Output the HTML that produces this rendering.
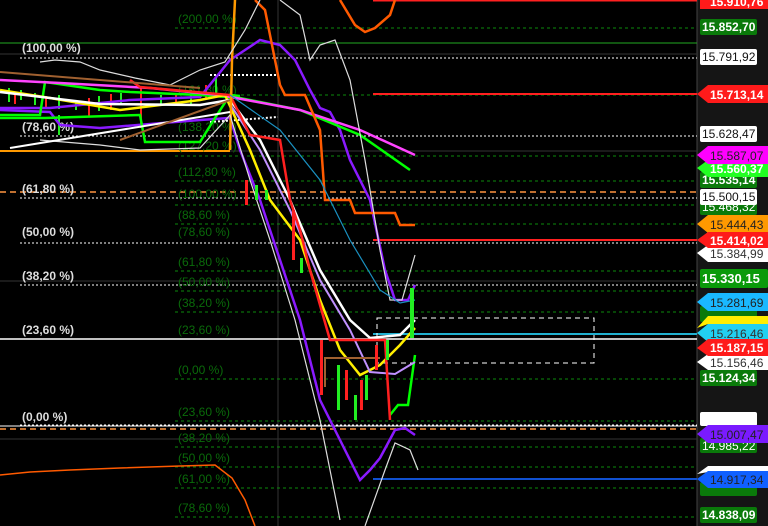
<!DOCTYPE html>
<html><head><meta charset="utf-8"><style>
html,body{margin:0;padding:0;background:#000;width:768px;height:526px;overflow:hidden}
svg{display:block;font-family:"Liberation Sans",sans-serif}
.g{fill:#0a6a0a;font-size:12px}
.w{fill:#ddd;font-size:12px;font-weight:bold}
.lb{font-size:12px}
</style></head><body>
<svg width="768" height="526" viewBox="0 0 768 526">
<rect width="768" height="526" fill="#000"/>
<rect x="697" y="0" width="71" height="526" fill="#151515"/>
<line x1="697" y1="0" x2="697" y2="526" stroke="#444"/>
<g stroke="#333" stroke-width="1">
<line x1="0" y1="54" x2="697" y2="54"/><line x1="0" y1="151" x2="697" y2="151"/>
<line x1="0" y1="281" x2="697" y2="281"/><line x1="0" y1="439" x2="697" y2="439"/>
<line x1="278" y1="0" x2="278" y2="526"/>
</g>
<line x1="0" y1="43" x2="697" y2="43" stroke="#22aa22"/>
<g stroke="#0d8a0d" stroke-dasharray="3,3">
<line x1="175" y1="28" x2="697" y2="28"/><line x1="175" y1="95" x2="697" y2="95"/>
<line x1="175" y1="156" x2="697" y2="156"/><line x1="175" y1="181" x2="697" y2="181"/>
<line x1="175" y1="205" x2="697" y2="205"/><line x1="175" y1="224" x2="697" y2="224"/>
<line x1="175" y1="271" x2="697" y2="271"/><line x1="175" y1="291" x2="697" y2="291"/>
<line x1="175" y1="312" x2="697" y2="312"/><line x1="175" y1="379" x2="697" y2="379"/>
<line x1="175" y1="421" x2="697" y2="421"/><line x1="175" y1="447" x2="697" y2="447"/>
<line x1="175" y1="467" x2="697" y2="467"/><line x1="175" y1="488" x2="697" y2="488"/>
<line x1="175" y1="517" x2="697" y2="517"/>
</g>
<g stroke="#fff" stroke-dasharray="2,2">
<line x1="20" y1="58" x2="697" y2="58"/><line x1="20" y1="136" x2="697" y2="136"/>
<line x1="20" y1="198" x2="697" y2="198"/><line x1="20" y1="243" x2="697" y2="243"/>
<line x1="20" y1="285" x2="697" y2="285"/><line x1="20" y1="425" x2="697" y2="425"/>
<line x1="210" y1="75" x2="278" y2="75" stroke-width="2"/><line x1="210" y1="122" x2="278" y2="117" stroke-width="2"/>
</g>
<g stroke="#c07030" stroke-dasharray="6,4" stroke-width="2">
<line x1="0" y1="192" x2="697" y2="192"/><line x1="0" y1="429" x2="697" y2="429"/>
</g>
<line x1="0" y1="151" x2="230" y2="151" stroke="#ff9900" stroke-width="2"/>
<line x1="0" y1="339" x2="697" y2="339" stroke="#fff" stroke-width="1.5"/>
<line x1="0" y1="426" x2="697" y2="426" stroke="#fff" stroke-width="1"/>
<line x1="373" y1="0" x2="697" y2="0" stroke="#ff2020" stroke-width="3"/>
<line x1="373" y1="94" x2="697" y2="94" stroke="#ff2020" stroke-width="2"/>
<line x1="373" y1="240" x2="697" y2="240" stroke="#ff2020" stroke-width="2"/>
<line x1="373" y1="334" x2="697" y2="334" stroke="#20b0d0" stroke-width="2"/>
<line x1="373" y1="479" x2="697" y2="479" stroke="#1050d0" stroke-width="2"/>
<rect x="377" y="318" width="217" height="45" fill="none" stroke="#fff" stroke-dasharray="5,4"/>
<text class="w" x="22" y="52">(100,00 %)</text><text class="w" x="22" y="131">(78,60 %)</text>
<text class="w" x="22" y="193">(61,80 %)</text><text class="w" x="22" y="236">(50,00 %)</text>
<text class="w" x="22" y="280">(38,20 %)</text><text class="w" x="22" y="334">(23,60 %)</text>
<text class="w" x="22" y="421">(0,00 %)</text>
<g class="g">
<text x="178" y="23">(200,00 %)</text><text x="178" y="94">(161,80 %)</text><text x="178" y="131">(138,20 %)</text>
<text x="178" y="150">(127,20 %)</text><text x="178" y="176">(112,80 %)</text><text x="178" y="198">(100,00 %)</text>
<text x="178" y="219">(88,60 %)</text><text x="178" y="236">(78,60 %)</text><text x="178" y="266">(61,80 %)</text>
<text x="178" y="286">(50,00 %)</text><text x="178" y="307">(38,20 %)</text><text x="178" y="334">(23,60 %)</text>
<text x="178" y="374">(0,00 %)</text><text x="178" y="416">(23,60 %)</text><text x="178" y="442">(38,20 %)</text>
<text x="178" y="462">(50,00 %)</text><text x="178" y="483">(61,00 %)</text><text x="178" y="512">(78,60 %)</text>
</g>
<!-- left candles -->
<g fill="#22ee22">
<rect x="8" y="88" width="2" height="14"/><rect x="20" y="90" width="2" height="10"/><rect x="34" y="93" width="2" height="12"/>
<rect x="58" y="95" width="2" height="14"/><rect x="75" y="100" width="2" height="10"/><rect x="98" y="96" width="2" height="15"/>
<rect x="120" y="93" width="2" height="12"/><rect x="160" y="95" width="2" height="10"/><rect x="190" y="90" width="2" height="14"/>
<rect x="215" y="78" width="2" height="18"/><rect x="58" y="115" width="2" height="20"/>
</g>
<g fill="#ff2020">
<rect x="14" y="92" width="2" height="12"/><rect x="45" y="96" width="2" height="12"/><rect x="88" y="98" width="2" height="18"/>
<rect x="110" y="94" width="2" height="16"/><rect x="140" y="88" width="2" height="40"/><rect x="175" y="94" width="2" height="12"/><rect x="205" y="85" width="2" height="14"/>
</g>
<g fill="none" stroke-width="2.5">
<polyline stroke="#8a1aff" points="0,108 50,108 130,100 200,97 230,60 260,40 280,45 295,60 310,90 320,108 330,112 340,130 350,160 370,200 385,270 395,300 408,300 415,285"/>
<polyline stroke="#8a1aff" points="0,110 50,112 60,125 100,128 200,120 230,118 240,150 260,200 280,260 300,320 320,400 340,440 360,480 370,470 380,458 395,430 405,428 415,435"/>
<polyline stroke="#00ff00" points="0,115 40,115 45,82 100,90 130,92 200,95 240,98 300,110 360,135 410,170"/>
<polyline stroke="#00ff00" points="0,118 45,118 140,115 145,142 200,142 215,118 230,95 240,96"/>
<polyline stroke="#00ff00" points="390,415 398,405 408,405 415,355"/>
<polyline stroke="#ff44ff" points="0,80 60,83 150,88 220,95 300,110 360,130 415,155"/>
<polyline stroke="#ffee00" points="0,90 50,98 120,110 200,100 225,95 250,150 270,200 300,240 320,300 340,350 360,375 380,365 400,345 415,328"/>
<polyline stroke="#fff" points="0,92 100,104 200,105 230,100 260,140 290,200 320,270 350,320 370,338 400,335 415,320"/>
<polyline stroke="#c090ff" stroke-width="2" points="230,104 260,150 290,210 320,280 350,330 370,372 395,374 415,362"/>
<polyline stroke="#ff2020" points="130,80 140,87 230,95 250,135 280,140 290,200 300,230 310,270 330,340 385,340 390,420"/>
<polyline stroke="#ff5a00" stroke-width="1.5" points="0,475 30,472 70,470 120,468 180,466 215,465 232,478 245,500 255,526"/>
<polyline stroke="#ff5a00" points="255,0 265,10 280,85 285,95 305,95 320,130 325,200 350,200 355,213 395,213 400,225 415,225"/>
<polyline stroke="#ff5a00" points="340,0 355,25 365,32 375,28 390,15 395,0"/>
<polyline stroke="#ff9900" points="230,150 232,60 235,0"/>
</g>
<g fill="none" stroke="#ddd" stroke-width="1.2">
<polyline points="40,62 55,60 80,62 100,70 135,78 170,85 200,70 225,62 245,30 260,0"/>
<polyline points="40,140 100,145 140,150 200,148 230,115 250,180 270,240 295,320 320,420 340,520"/>
<polyline points="280,0 300,15 310,60 320,45 335,40 350,80 365,160 380,250 390,300 402,300 415,255"/>
<polyline points="365,526 385,470 395,443 410,450 418,470"/>
</g>
<polyline fill="none" stroke="#1a90c0" stroke-width="1.2" points="230,95 280,130 320,180 350,240 380,290 400,303 415,300"/>
<line x1="10" y1="148" x2="230" y2="112" stroke="#fff" stroke-width="2"/>
<line x1="0" y1="72" x2="200" y2="88" stroke="#a06030" stroke-width="2"/>
<line x1="120" y1="140" x2="230" y2="100" stroke="#a06030" stroke-width="2"/>
<polyline fill="none" stroke="#a06030" stroke-width="2" points="325,387 325,358 380,358"/>
<g fill="#22ee22">
<rect x="300" y="258" width="3" height="15"/><rect x="337" y="365" width="3" height="45"/><rect x="354" y="395" width="3" height="25"/>
<rect x="365" y="375" width="3" height="25"/><rect x="410" y="288" width="4" height="50"/><rect x="386" y="340" width="3" height="20"/>
<rect x="255" y="185" width="3" height="15"/><rect x="265" y="190" width="3" height="10"/>
</g>
<g fill="#ff2020">
<rect x="320" y="340" width="3" height="55"/><rect x="345" y="370" width="3" height="30"/><rect x="360" y="380" width="3" height="30"/>
<rect x="292" y="210" width="3" height="50"/><rect x="245" y="180" width="3" height="25"/><rect x="375" y="345" width="3" height="25"/>
</g>
<g class="lb">
<rect x="700" y="0" width="68" height="9" fill="#ff1a1a"/><text x="710" y="6" fill="#fff" font-weight="bold">15.910,76</text>
<rect x="700" y="19" width="57" height="16" rx="2" fill="#0a7a0a"/><text x="702" y="31" fill="#fff" font-weight="bold">15.852,70</text>
<rect x="700" y="49" width="57" height="16" rx="2" fill="#fff"/><text x="702" y="61" fill="#111">15.791,92</text>
<polygon points="697,94 708,85 768,85 768,103 708,103" fill="#ff1a1a"/><text x="710" y="99" fill="#fff" font-weight="bold">15.713,14</text>
<rect x="700" y="126" width="57" height="16" rx="2" fill="#fff"/><text x="702" y="138" fill="#111">15.628,47</text>
<rect x="700" y="172" width="57" height="16" rx="2" fill="#0a7a0a"/><text x="702" y="184" fill="#fff" font-weight="bold">15.535,14</text>
<polygon points="697,168 708,160 768,160 768,177 708,177" fill="#22ff22"/><text x="710" y="173" fill="#fff" font-weight="bold">15.560,37</text>
<polygon points="697,155 708,146 768,146 768,164 708,164" fill="#ff00ff"/><text x="710" y="160" fill="#222">15.587,07</text>
<rect x="700" y="199" width="57" height="16" rx="2" fill="#0a7a0a"/><text x="702" y="211" fill="#fff">15.468,32</text>
<rect x="700" y="189" width="57" height="16" rx="2" fill="#fff"/><text x="702" y="201" fill="#111">15.500,15</text>
<polygon points="697,224 708,215 768,215 768,233 708,233" fill="#ff9900"/><text x="710" y="229" fill="#222">15.444,43</text>
<polygon points="697,253 708,245 768,245 768,262 708,262" fill="#fff"/><text x="710" y="258" fill="#333">15.384,99</text>
<polygon points="697,240 708,232 768,232 768,248 708,248" fill="#ff1a1a"/><text x="710" y="245" fill="#fff" font-weight="bold">15.414,02</text>
<rect x="700" y="269" width="68" height="19" rx="2" fill="#0a9a0a"/><text x="702" y="283" fill="#fff" font-weight="bold" font-size="13">15.330,15</text>
<rect x="700" y="306" width="57" height="16" rx="2" fill="#0a7a0a"/>
<polygon points="697,302 708,293 768,293 768,311 708,311" fill="#1ab8ff"/><text x="710" y="307" fill="#222">15.281,69</text>
<polygon points="697,328 708,316 768,316 768,324 708,324" fill="#ffee00"/>
<polygon points="697,333 708,324 768,324 768,342 708,342" fill="#22d0f0"/><text x="710" y="338" fill="#333">15.216,46</text>
<polygon points="697,362 708,354 768,354 768,370 708,370" fill="#fff"/><text x="710" y="367" fill="#333">15.156,46</text>
<polygon points="697,348 708,339 768,339 768,356 708,356" fill="#ff1a1a"/><text x="710" y="352" fill="#fff" font-weight="bold">15.187,15</text>
<rect x="700" y="370" width="57" height="16" rx="2" fill="#0a7a0a"/><text x="702" y="382" fill="#fff" font-weight="bold">15.124,34</text>
<rect x="700" y="412" width="57" height="14" rx="2" fill="#fff"/>
<rect x="700" y="438" width="57" height="15" rx="2" fill="#0a7a0a"/><text x="702" y="450" fill="#fff">14.985,22</text>
<polygon points="697,434 708,425 768,425 768,443 708,443" fill="#7a1aff"/><text x="710" y="439" fill="#222">15.007,47</text>
<rect x="700" y="482" width="57" height="14" rx="2" fill="#0a7a0a"/>
<polygon points="697,474 708,466 768,466 768,472 708,472" fill="#fff"/>
<polygon points="697,479 708,471 768,471 768,488 708,488" fill="#1060ff"/><text x="710" y="484" fill="#222">14.917,34</text>
<rect x="700" y="507" width="57" height="16" rx="2" fill="#0a7a0a"/><text x="702" y="519" fill="#fff" font-weight="bold">14.838,09</text>
</g>
</svg>
</body></html>
